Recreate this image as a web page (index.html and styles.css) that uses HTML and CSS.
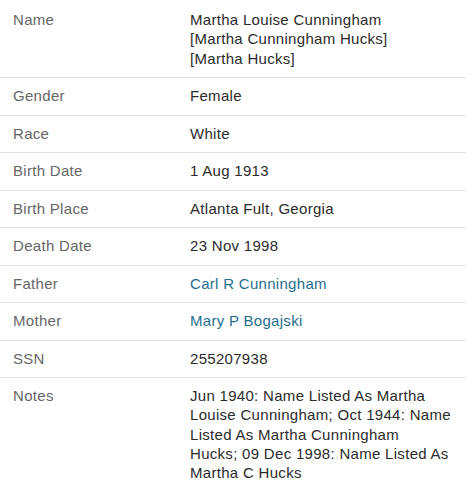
FILE: index.html
```html
<!DOCTYPE html>
<html>
<head>
<meta charset="utf-8">
<link rel="stylesheet" href="styles.css">
</head>
<body>
<div class="facts">
  <div class="row"><div class="label">Name</div><div class="value">Martha Louise Cunningham<br>[Martha Cunningham Hucks]<br>[Martha Hucks]</div></div>
  <div class="row"><div class="label">Gender</div><div class="value">Female</div></div>
  <div class="row"><div class="label">Race</div><div class="value">White</div></div>
  <div class="row"><div class="label">Birth Date</div><div class="value">1 Aug 1913</div></div>
  <div class="row"><div class="label">Birth Place</div><div class="value">Atlanta Fult, Georgia</div></div>
  <div class="row"><div class="label">Death Date</div><div class="value">23 Nov 1998</div></div>
  <div class="row"><div class="label">Father</div><div class="value"><a class="link" href="#">Carl R Cunningham</a></div></div>
  <div class="row"><div class="label">Mother</div><div class="value"><a class="link" href="#">Mary P Bogajski</a></div></div>
  <div class="row"><div class="label">SSN</div><div class="value">255207938</div></div>
  <div class="row last"><div class="label">Notes</div><div class="value">Jun 1940: Name Listed As Martha<br>Louise Cunningham; Oct 1944: Name<br>Listed As Martha Cunningham<br>Hucks; 09 Dec 1998: Name Listed As<br>Martha C Hucks</div></div>
</div>
</body>
</html>
```
FILE: styles.css
```css
html, body {
  margin: 0;
  padding: 0;
  background: #fff;
}
body {
  font-family: "Liberation Sans", Arial, sans-serif;
  font-size: 15px;
  letter-spacing: 0.3px;
  line-height: 19.25px;
}
.facts {
  width: 466px;
  padding-top: 2px;
}
.row {
  display: grid;
  grid-template-columns: 190px 1fr;
  padding: 8px 0 9.25px;
  border-bottom: 1px solid #e3e3e3;
}
.row.last {
  border-bottom: none;
}
.label {
  padding-left: 13px;
  color: #666;
}
.value {
  color: #2b2b2b;
  white-space: nowrap;
}
.link {
  color: #1f6e8e;
  text-decoration: none;
}
```
